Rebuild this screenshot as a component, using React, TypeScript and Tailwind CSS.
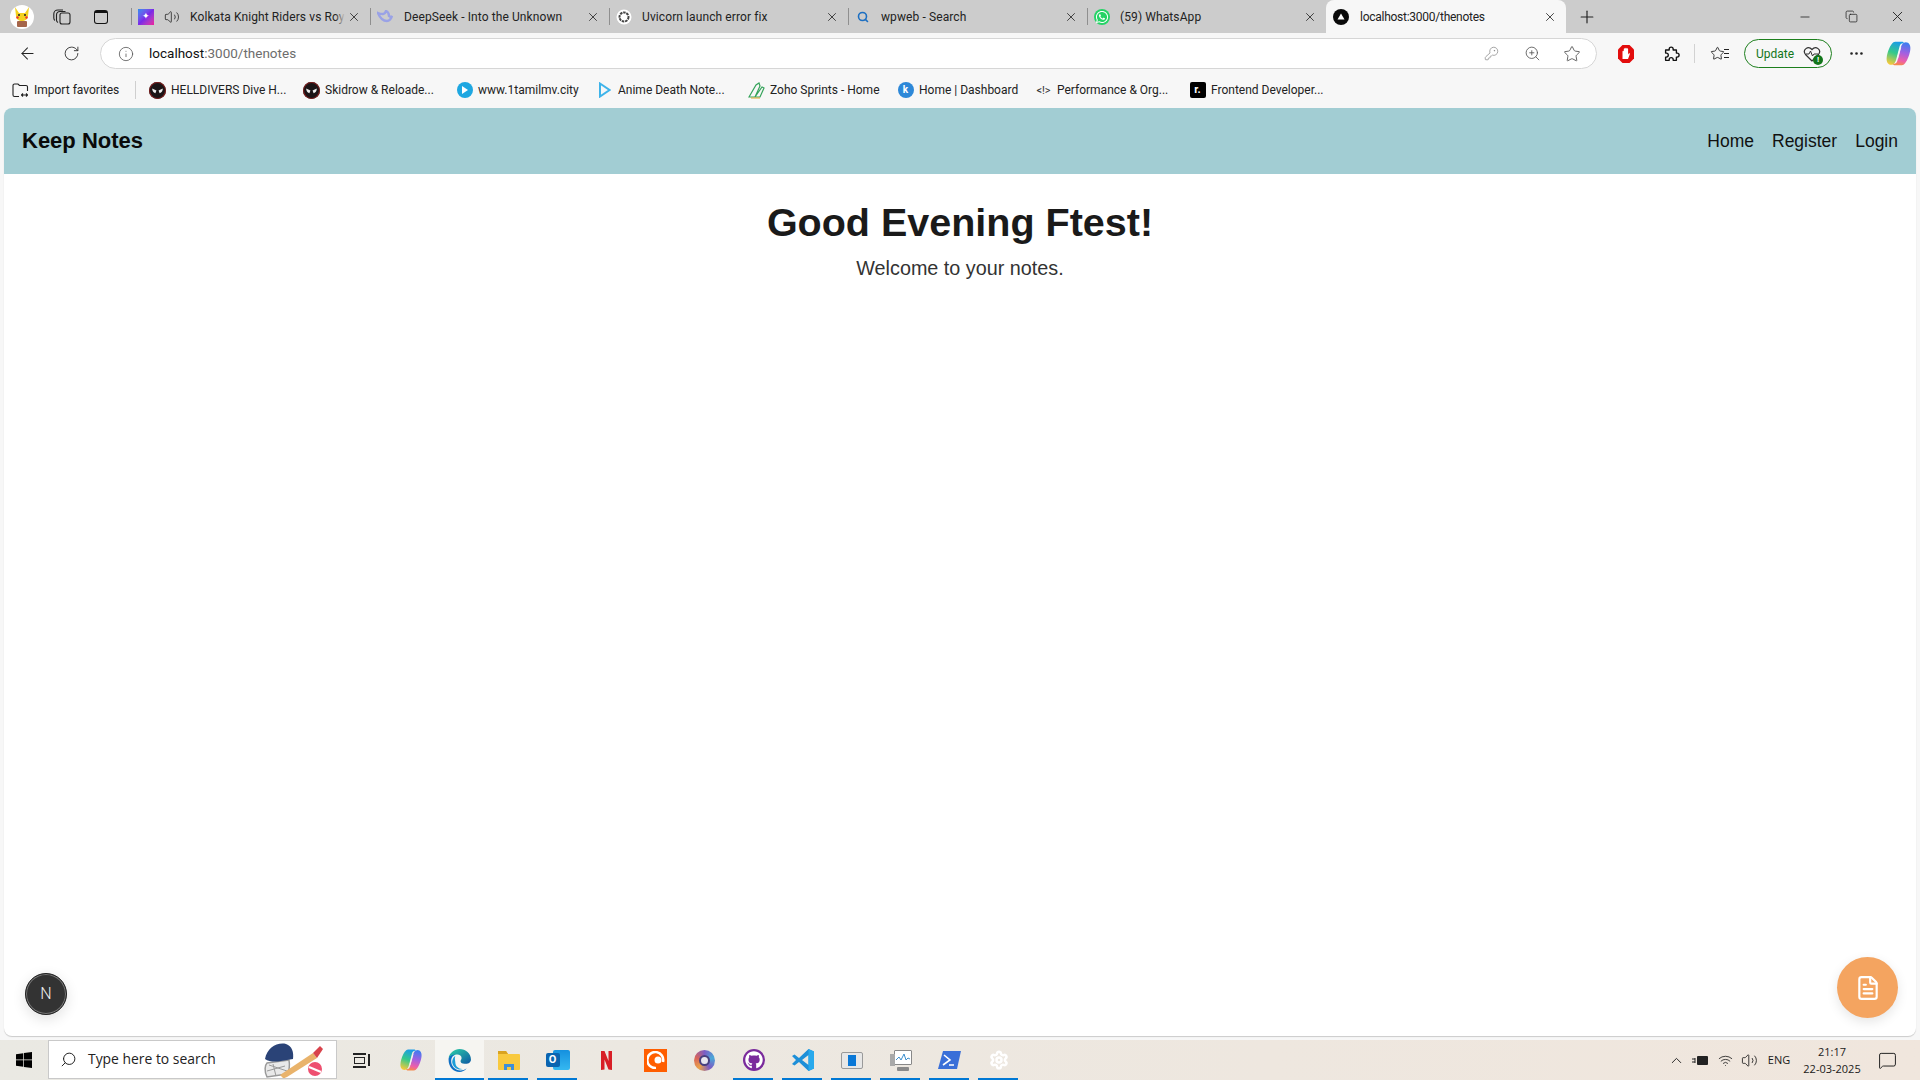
import React from "react";
import { ArrowLeft, RotateCw, Info, X, Plus, Minus, KeyRound, ZoomIn, Star, MoreHorizontal, Volume2, Search, ChevronUp, MessageSquare, FileText, Settings, Copy, Wifi } from "lucide-react";
import { FaWhatsapp, FaGithub } from "react-icons/fa";

const Copilot = ({ s = 24, id }: { s?: number; id: string }) => (
  <svg width={s} height={s} viewBox="0 0 24 24">
    <defs>
      <linearGradient id={`${id}a`} x1="0.6" y1="0" x2="0.3" y2="1"><stop offset="0" stopColor="#1a9be8" /><stop offset="0.5" stopColor="#35c98a" /><stop offset="1" stopColor="#f6c93a" /></linearGradient>
      <linearGradient id={`${id}b`} x1="0.6" y1="0" x2="0.4" y2="1"><stop offset="0" stopColor="#3b7df0" /><stop offset="0.45" stopColor="#a45fe0" /><stop offset="0.8" stopColor="#ef5fa7" /><stop offset="1" stopColor="#f58a4b" /></linearGradient>
    </defs>
    <path d="M9 1.500h6c1 0 1.800.6 2 1.500-2-.5-3.500.5-4 2.500L10 17c-.6 2.500-2 5-4.500 5C2.500 22 1 19 1.500 15.500 2 11 4 6 6 3.500 7 2.200 8 1.500 9 1.500z" fill={`url(#${id}a)`} />
    <path d="M15 22.500H9c-1 0-1.800-.6-2-1.500 2 .5 3.500-.5 4-2.500L14 7c.6-2.500 2-5 4.500-5 3 0 4.500 3 4 6.500-.5 4.500-2.500 9.500-4.500 12-1 1.300-2 2-3 2z" fill={`url(#${id}b)`} />
    <path d="M10.500 16.500L13 7.500c.4-1 1-1.500 1.500-1.500l-.5 2-2.500 9z" fill="#f4f4f4" opacity=".9" />
  </svg>
);

const Dead = () => (
  <svg width="17" height="17" viewBox="0 0 16 16">
    <circle cx="8" cy="8" r="8" fill="#1b1416" />
    <circle cx="8" cy="8" r="7.500" fill="none" stroke="#7c1d1d" />
    <path d="M3 6l4 2-1 2.500C4 10 3 8 3 6zM13 6L9 8l1 2.500C12 10 13 8 13 6z" fill="#eee" />
  </svg>
);

const TabFavicons: Record<string, React.ReactNode> = {
  kkr: (
    <div className="w-[16px] h-[16px] bg-gradient-to-br from-[#1f8df0] via-[#7a28e8] to-[#f0149a] flex items-center justify-center text-white text-[9px] leading-none">✦</div>
  ),
  deep: (
    <svg width="16" height="14" viewBox="0 0 16 14"><path d="M1 3c2 5 5 8 9 8 2 0 4-2 5-5-1 1-2 1-3 0 0-2-1-4-3-5-1 3-3 4-8 2z" fill="none" stroke="#9aa2e6" strokeWidth="2.400" /></svg>
  ),
  gpt: (
    <svg width="16" height="16" viewBox="0 0 16 16"><circle cx="8" cy="8" r="7.500" fill="#fff" /><circle cx="8" cy="8" r="4.500" fill="none" stroke="#444" strokeWidth="2" strokeDasharray="2.500 .8" /></svg>
  ),
  search: <Search size={12} strokeWidth={3.2} className="text-[#1c6fc2]" />,
  wa: (
    <div className="w-[16px] h-[16px] rounded-full bg-[#25d366] flex items-center justify-center text-white"><FaWhatsapp size={14} /></div>
  ),
  next: (
    <svg width="16" height="16" viewBox="0 0 16 16"><circle cx="8" cy="8" r="8" fill="#0a0a0a" /><path d="M8 4.500l3.500 6h-7z" fill="#fff" /></svg>
  ),
};

function Tab({ icon, title, extra, active, fade, textLeft }: { icon: string; title: string; extra?: boolean; active?: boolean; fade?: boolean; textLeft: string }) {
  return (
    <div className={active ? "w-[240px] h-[33px] bg-[#f7f7f7] rounded-t-[8px] flex items-center relative" : "w-[239px] h-[33px] flex items-center relative"}>
      {!active && <div className="absolute left-0 top-[8px] h-[17px] w-px bg-[#8f8f8f]" />}
      <div className="w-[16px] ml-[7px] flex items-center justify-center">{TabFavicons[icon]}</div>
      {extra && <Volume2 size={16} strokeWidth={1.2} className="ml-[10px] text-[#222]" />}
      <div className={`${textLeft} flex-1 min-w-0 overflow-hidden whitespace-nowrap text-[12px] ${active ? "tracking-[-0.26px]" : "tracking-[0.1px]"} text-[#222] relative`}>
        {title}
        {fade && <div className="absolute right-0 top-0 bottom-0 w-[10px] bg-gradient-to-r from-transparent to-[#cccccc]" />}
      </div>
      <X size={14} strokeWidth={1.4} className={`${fade ? "ml-[2px]" : "ml-[6px]"} mr-[9px] text-[#222] shrink-0`} />
    </div>
  );
}

function Bookmark({ width, icon, label }: { width: string; icon: React.ReactNode; label: string }) {
  return (
    <div className={`${width} flex items-center shrink-0`}>
      <div className="w-[17px] h-[17px] flex items-center justify-center shrink-0">{icon}</div>
      <span className="ml-[5px] whitespace-nowrap text-[12px] text-[#222]">{label}</span>
    </div>
  );
}

function Slot({ active, line, children }: { active?: boolean; line?: boolean; children: React.ReactNode }) {
  return (
    <div className={`w-[49px] h-[40px] flex items-center justify-center relative shrink-0 ${active ? "bg-[#f6f5f1]" : ""}`}>
      {children}
      {line && <div className={`absolute bottom-0 h-[2px] bg-[#0078d4] ${active ? "left-0 right-0" : "left-[4px] right-[5px]"}`} />}
    </div>
  );
}

export default function App() {
  return (
    <div className="w-[1920px] h-[1080px] overflow-hidden flex flex-col bg-[#f7f7f7] font-['Roboto',sans-serif]">
      {/* tab strip */}
      <div className="h-[33px] bg-[#cccccc] flex items-center shrink-0">
        <div className="w-[131px] h-[33px] flex items-center shrink-0">
          <div className="ml-[10px] w-[24px] h-[24px] rounded-full bg-white flex items-center justify-center overflow-hidden shrink-0">
            <svg width="20" height="22" viewBox="0 0 20 22">
              <path d="M3 1l4 6h6l4-6-1 9c0 3-3 5-6 5s-6-2-6-5z" fill="#f4d21f" />
              <circle cx="7" cy="9" r="1" fill="#222" /><circle cx="13" cy="9" r="1" fill="#222" />
              <circle cx="5.500" cy="11.500" r="1.200" fill="#e33" /><circle cx="14.500" cy="11.500" r="1.200" fill="#e33" />
              <rect x="5" y="15" width="10" height="6" rx="1" fill="#a5654a" />
            </svg>
          </div>
          <svg width="18" height="16" viewBox="0 0 18 16" className="ml-[19px] shrink-0" fill="none" stroke="#222" strokeWidth="1.100">
            <rect x="7" y="4" width="10" height="11" rx="2" />
            <path d="M5 13.500C4 13 3.500 12.500 3.500 11V6c0-2 1.500-3.500 3.500-3.500h5.500" />
            <path d="M2 11.500C1 11 .8 10 .8 9V5C.8 2.500 2.500 1 5 1h5" />
          </svg>
          <div className="ml-[23px] w-[14px] h-[14px] border-[1.5px] border-[#111] rounded-[3px] border-t-[3px] shrink-0" />
        </div>
        <Tab icon="kkr" title="Kolkata Knight Riders vs Roya" extra fade textLeft="ml-[10px]" />
        <Tab icon="deep" title="DeepSeek - Into the Unknown" textLeft="ml-[11px]" />
        <Tab icon="gpt" title="Uvicorn launch error fix" textLeft="ml-[10px]" />
        <Tab icon="search" title="wpweb - Search" textLeft="ml-[10px]" />
        <Tab icon="wa" title="(59) WhatsApp" textLeft="ml-[10px]" />
        <Tab icon="next" title="localhost:3000/thenotes" active textLeft="ml-[11px]" />
        <Plus size={20} strokeWidth={1.4} className="ml-[11px] text-[#222] shrink-0" />
        <div className="flex-1" />
        <Minus size={14} strokeWidth={1.4} className="text-[#222] shrink-0" />
        <Copy size={13} strokeWidth={1.4} className="ml-[33px] text-[#222] shrink-0" />
        <X size={17} strokeWidth={1.3} className="ml-[31px] mr-[14px] text-[#222] shrink-0" />
      </div>

      {/* toolbar */}
      <div className="h-[41px] flex items-center shrink-0">
        <ArrowLeft size={19} strokeWidth={1.3} className="ml-[18px] text-[#222] shrink-0" />
        <RotateCw size={17} strokeWidth={1.3} className="ml-[26px] text-[#333] shrink-0" />
        <div className="ml-[20px] w-[1497px] h-[31px] rounded-full bg-white border border-[#d6d6d6] flex items-center shrink-0">
          <Info size={16} strokeWidth={1.2} className="ml-[17px] text-[#555] shrink-0" />
          <div className="ml-[15px] text-[13.5px] text-[#6d6d6d] whitespace-nowrap"><span className="text-[#111]">localhost</span>:3000/thenotes</div>
          <div className="flex-1" />
          <KeyRound size={15} strokeWidth={1.2} className="text-[#8a8a8a] shrink-0" />
          <ZoomIn size={17} strokeWidth={1.2} className="ml-[25px] text-[#555] shrink-0" />
          <Star size={18} strokeWidth={1.2} className="ml-[22px] mr-[15px] text-[#555] shrink-0" />
        </div>
        <svg width="18" height="20" viewBox="0 0 18 20" className="ml-[20px] shrink-0">
          <path d="M5.500 1h7L17 5.500v9L12.500 19h-7L1 14.500v-9z" fill="#e30d0d" />
          <path d="M5.500 15V7.500c0-1 1.300-1 1.300 0V5c0-1 1.400-1 1.400 0v-.500c0-1 1.500-1 1.500 0V5c0-1 1.400-1 1.400 0v5.500l.7-1c.6-.8 1.500 0 1 .7L11 15z" fill="#fff" />
        </svg>
        <svg width="18" height="18" viewBox="0 0 20 20" className="ml-[27px] shrink-0" fill="none" stroke="#111" strokeWidth="1.500" strokeLinejoin="round">
          <path d="M8 4.500a2.200 2.200 0 014.400 0V5.500H16V9h.8a2.200 2.200 0 010 4.400H16V17h-3.600v-.8a2.200 2.200 0 00-4.400 0V17H4v-3.600h.8a2.200 2.200 0 000-4.400H4V5.500h4z" />
        </svg>
        <div className="ml-[14px] w-px h-[19px] bg-[#d2d2d2] shrink-0" />
        <div className="ml-[15px] flex items-center shrink-0"><Star size={15} strokeWidth={1.4} className="text-[#222]" /><div className="w-[5px] h-[9px] border-y border-[#222] relative ml-[-1px]"><div className="absolute top-[3px] left-0 right-0 h-px bg-[#222]" /></div></div>
        <div className="ml-[15px] w-[88px] h-[29px] rounded-full border border-[#1d7f1d] flex items-center shrink-0">
          <span className="ml-[11px] text-[12px] text-[#12761a] whitespace-nowrap">Update</span>
          <div className="ml-[9px] relative w-[18px] h-[18px] flex items-center justify-center">
            <svg width="18" height="16" viewBox="0 0 18 16"><path d="M9 15L2.500 8.500C-1 4 5 -1 9 3.500c4-4.500 10 .5 6.500 5z" fill="none" stroke="#333" strokeWidth="1.200" /><path d="M3 8h3l1.500-3 2 5 1.500-2h4" fill="none" stroke="#333" strokeWidth="1" /></svg>
            <div className="absolute right-[-2px] bottom-[-2px] w-[10px] h-[10px] rounded-full bg-[#12761a] text-white text-[8px] leading-[10px] text-center font-bold">!</div>
          </div>
        </div>
        <MoreHorizontal size={17} strokeWidth={1.8} className="ml-[16px] text-[#222] shrink-0" />
        <div className="ml-[20px] shrink-0"><Copilot s={27} id="t" /></div>
      </div>

      {/* bookmarks */}
      <div className="h-[34px] pb-[2px] flex items-center shrink-0 pl-[12px]">
        <div className="w-[123px] flex items-center shrink-0">
          <svg width="17" height="15" viewBox="0 0 17 15" fill="none" stroke="#222" strokeWidth="1.100" className="shrink-0">
            <path d="M7 13.500H2.500A1.500 1.500 0 011 12V2.500A1.500 1.500 0 012.500 1H6l1.500 1.500H14A1.500 1.500 0 0115.500 4v4" />
            <path d="M9 12h7M9.500 12l1.500-1.500M9.500 12l1.500 1.500M15.500 12L14 10.500M15.500 12L14 13.500" />
          </svg>
          <span className="ml-[5px] whitespace-nowrap text-[12px] text-[#222]">Import favorites</span>
        </div>
        <div className="w-px h-[18px] bg-[#cfcfcf] shrink-0" />
        <div className="w-[13px] shrink-0" />
        <Bookmark width="w-[154px]" icon={<Dead />} label="HELLDIVERS Dive H..." />
        <Bookmark width="w-[153px]" icon={<Dead />} label="Skidrow & Reloade..." />
        <Bookmark width="w-[140px]" icon={
          <div className="w-[16px] h-[16px] rounded-full bg-[#1ea7e1] flex items-center justify-center"><div className="w-0 h-0 border-y-[4px] border-y-transparent border-l-[6px] border-l-white ml-[1px]" /></div>
        } label="www.1tamilmv.city" />
        <Bookmark width="w-[152px]" icon={
          <svg width="13" height="16" viewBox="0 0 13 16"><path d="M2 1.500L11.500 8 2 14.500z" fill="none" stroke="#3fb4ea" strokeWidth="2" /></svg>
        } label="Anime Death Note..." />
        <Bookmark width="w-[149px]" icon={
          <svg width="17" height="17" viewBox="0 0 17 17"><path d="M1 15L8 3l3-2 1 3-5 11zM7 15l7-10 2 1-4 9z" fill="none" stroke="#35a35a" strokeWidth="1.200" /><path d="M3 16h9" stroke="#e0a92d" strokeWidth="1" /></svg>
        } label="Zoho Sprints - Home" />
        <Bookmark width="w-[138px]" icon={
          <div className="w-[16px] h-[16px] rounded-full bg-[#2d88d8] text-white font-bold text-[10px] leading-[16px] text-center">k</div>
        } label="Home | Dashboard" />
        <Bookmark width="w-[154px]" icon={
          <span className="text-[11px] text-[#333] leading-none whitespace-nowrap">&lt;!&gt;</span>
        } label="Performance & Org..." />
        <Bookmark width="w-[140px]" icon={
          <div className="w-[16px] h-[16px] rounded-[2px] bg-black text-white font-bold text-[11px] leading-[15px] text-center">r.</div>
        } label="Frontend Developer..." />
      </div>

      {/* page */}
      <div className="mx-[4px] h-[928px] shrink-0 relative bg-white rounded-[8px] shadow-[0_1px_1px_rgba(0,0,0,0.18)] font-['Liberation_Sans',sans-serif]">
        <nav className="h-[66px] bg-[#a2cdd3] rounded-t-[8px] flex items-center pl-[18px] pr-[18px]">
          <div className="text-[22px] font-bold text-[#0a0a0a] leading-none">Keep Notes</div>
          <div className="flex-1" />
          <div className="flex items-center gap-[18px] text-[17.5px] text-[#111]">
            <span>Home</span>
            <span>Register</span>
            <span>Login</span>
          </div>
        </nav>
        <div className="flex flex-col items-center pt-[24px]">
          <h1 className="text-[39.5px] leading-[48px] font-bold text-[#1a1a1a]">Good Evening Ftest!</h1>
          <p className="mt-[8px] text-[19.8px] leading-[28px] text-[#333]">Welcome to your notes.</p>
        </div>
        <div className="absolute left-[21px] bottom-[21px] w-[42px] h-[42px] rounded-full bg-[#333] border-[1.5px] border-[#222] shadow-[0_4px_14px_rgba(0,0,0,0.12),inset_0_0_0_1px_#777] flex items-center justify-center text-[#eee] text-[16px] font-light font-['Roboto',sans-serif]">N</div>
        <div className="absolute right-[18px] bottom-[18px] w-[61px] h-[61px] rounded-full bg-[#f4a460] shadow-[0_4px_12px_rgba(0,0,0,0.1)] flex items-center justify-center text-white">
          <FileText size={26} strokeWidth={2} />
        </div>
      </div>

      <div className="flex-1" />

      {/* taskbar */}
      <div className="h-[40px] shrink-0 flex items-center bg-gradient-to-r from-[#eae9e3] to-[#f0e6dd]">
        <div className="w-[48px] h-[40px] flex items-center justify-center shrink-0">
          <svg width="16" height="16" viewBox="0 0 16 16" fill="#000"><path d="M0 2.200L7.300 1.200V7.500H0zM8 1L16 0V7.500H8zM0 8.300H7.300V14.800L0 13.800zM8 8.300H16V16L8 15z" /></svg>
        </div>
        <div className="w-[289px] h-[39px] mb-[1px] bg-white border border-[#c9c9c9] flex items-center shrink-0 relative overflow-hidden">
          <Search size={17} strokeWidth={1.4} className="ml-[11px] text-[#222] -scale-x-100" />
          <span className="ml-[11px] text-[13.9px] text-[#222] font-['Open_Sans',sans-serif]">Type here to search</span>
          <svg width="66" height="38" viewBox="0 0 66 38" className="absolute right-[11px] top-0">
            <path d="M8 36C5 30 6 24 8 22l22-3c1 6 0 11-2 14z" fill="#e9e9e9" stroke="#9a9a9a" strokeWidth="1.500" />
            <path d="M10 24l18 6M8 30l18-5M14 23l3 12" stroke="#9a9a9a" strokeWidth="1" />
            <path d="M6 18C8 7 18 1 27 3c6 2 8 8 7 15l-12 2c-5 1-12 1-16-2z" fill="#2a4377" />
            <path d="M24 37l-3-3 33-22 4 5-30 19c-2 1-3 1-4 1z" fill="#e9b36b" />
            <path d="M54 12l7-7 3 3-6 9z" fill="#d9434c" />
            <circle cx="56" cy="28" r="7" fill="#ee4f6f" /><path d="M50 26l12 5" stroke="#fff" strokeWidth="2" />
          </svg>
        </div>
        <Slot>
          <div className="flex items-center gap-[2px]"><div className="w-[13px] h-[15px] border-y-[2px] border-[#222] relative"><div className="absolute inset-x-[1px] top-[2px] bottom-[2px] border border-[#222]" /></div><div className="w-[2px] h-[12px] bg-[#222]" /></div>
        </Slot>
        <Slot><Copilot s={24} id="b" /></Slot>
        <Slot active line>
          <svg width="25" height="25" viewBox="0 0 24 24">
            <defs><linearGradient id="edg" x1="0" y1="0" x2="1" y2="1"><stop offset="0" stopColor="#2fd3a6" /><stop offset="1" stopColor="#0c59a4" /></linearGradient></defs>
            <path d="M12 1c6 0 11 4.500 11 10 0 3-3 4.500-6 4-3 0-4-1-4-2.500 0-1 1-1.500 1-3 0-2.500-3-4-6-3C5 7.500 2 10 1.500 9 3 4.500 7 1 12 1z" fill="url(#edg)" />
            <path d="M1.500 11c0-3 3-4.500 6-4.500-3 1.500-3.500 4-3.500 6 0 5 4 9 9 9 2 0 4-.5 6-2-2 2.500-4.500 3.500-7 3.500C6 23 1.500 18 1.500 11z" fill="#0e6fc4" />
            <path d="M8 14c0 4 4 7 8 6-4 2-10 0-11-6 0-3 1.500-6 3-6-1 2 0 4 0 6z" fill="#1d9ed8" />
          </svg>
        </Slot>
        <Slot line>
          <svg width="24" height="22" viewBox="0 0 24 22"><path d="M1 3a1 1 0 011-1h7l2 3h11a1 1 0 011 1v14a1 1 0 01-1 1H2a1 1 0 01-1-1z" fill="#f8c93e" /><path d="M1 2h8l2 3H1z" fill="#d9a320" /><path d="M7 15h10v6h-3v-3h-4v3H7z" fill="#3d8fd8" /></svg>
        </Slot>
        <Slot line>
          <div className="relative w-[24px] h-[22px]"><div className="absolute right-0 top-[1px] w-[17px] h-[20px] rounded-[2px] bg-gradient-to-b from-[#1490df] to-[#35b8f0]" /><div className="absolute left-0 top-[4px] w-[14px] h-[14px] rounded-[2px] bg-[#0a64b0] text-white text-[11px] font-bold leading-[14px] text-center">O</div></div>
        </Slot>
        <Slot>
          <svg width="11" height="19" viewBox="0 0 11 19"><path d="M0 0h3.500l4 10V0H11v19l-3.500-.5-4-10V18.500L0 19z" fill="#d81f26" /></svg>
        </Slot>
        <Slot>
          <div className="w-[23px] h-[23px] bg-[#ff5e00] flex items-center justify-center">
            <svg width="18" height="18" viewBox="0 0 18 18"><path d="M16 11A8 8 0 109 17" fill="none" stroke="#fff" strokeWidth="2.500" /><circle cx="11" cy="9" r="3.500" fill="#fff" /></svg>
          </div>
        </Slot>
        <Slot>
          <div className="w-[21px] h-[21px] rounded-full bg-[conic-gradient(#7c5cc4,#4aa8d8,#7c5cc4,#e9a14b,#d8645a,#7c5cc4)] flex items-center justify-center"><div className="w-[11px] h-[11px] rounded-full bg-[#e8e6ee] border-[2.5px] border-[#49407f]" /></div>
        </Slot>
        <Slot line>
          <div className="w-[22px] h-[22px] rounded-full bg-[#7a2a9c] flex items-center justify-center text-white"><FaGithub size={18} /></div>
        </Slot>
        <Slot line>
          <svg width="24" height="24" viewBox="0 0 24 24"><path d="M17.500 1L8 10 3.500 6.500 1 8l4 4-4 4 2.500 1.500L8 14l9.500 9 5.500-2.500v-17zM17.500 7v10L11 12z" fill="#1d8fd8" /><path d="M17.500 1L23 3.500v17L17.500 23z" fill="#29a9ec" /></svg>
        </Slot>
        <Slot line>
          <div className="w-[22px] h-[17px] rounded-[2px] bg-[#e7e7e7] border border-[#9a9a9a] flex items-center pl-[6px]"><div className="w-[8px] h-[11px] bg-[#0a78d7]" /></div>
        </Slot>
        <Slot line>
          <div className="relative w-[22px] h-[21px]"><div className="absolute right-0 top-0 w-[18px] h-[15px] bg-white border border-[#888] rounded-[1px]"><svg width="16" height="13" viewBox="0 0 16 13"><path d="M1 9l3-3 2 3 3-6 2 6 2-2 2 1" fill="none" stroke="#3a8fd0" strokeWidth="1" /></svg></div><div className="absolute left-0 top-[4px] w-[5px] h-[12px] bg-[#a9a9a9]" /><div className="absolute right-[3px] bottom-0 w-[12px] h-[4px] bg-[#8a8a8a] rounded-[1px]" /></div>
        </Slot>
        <Slot line>
          <svg width="23" height="18" viewBox="0 0 23 18"><path d="M5 0h18l-4 18H0z" fill="#3a6fd8" /><path d="M6 4l6 5-7 5M11 14h5" fill="none" stroke="#fff" strokeWidth="1.600" /></svg>
        </Slot>
        <Slot line>
          <Settings size={20} strokeWidth={3} className="text-white" />
        </Slot>
        <div className="flex-1" />
        <div className="flex items-center shrink-0 text-[#1a1a1a]">
          <ChevronUp size={17} strokeWidth={1.3} />
          <svg width="17" height="11" viewBox="0 0 17 11" className="ml-[7px]"><rect x="5" y="1" width="11" height="9" rx="1" fill="#222" /><path d="M0 4h3M0 7h3M3 3v5" stroke="#222" /></svg>
          <Wifi size={15} strokeWidth={1.3} className="ml-[9px]" />
          <Volume2 size={17} strokeWidth={1.2} className="ml-[8px]" />
          <span className="ml-[9px] w-[24px] text-[11px] text-center font-['Open_Sans',sans-serif]">ENG</span>
          <div className="ml-[10px] w-[62px] text-[11px] leading-[17px] text-center font-['Open_Sans',sans-serif]">
            <div>21:17</div>
            <div>22-03-2025</div>
          </div>
          <MessageSquare size={19} strokeWidth={1.2} className="ml-[15px] mr-[23px]" />
        </div>
      </div>
    </div>
  );
}
